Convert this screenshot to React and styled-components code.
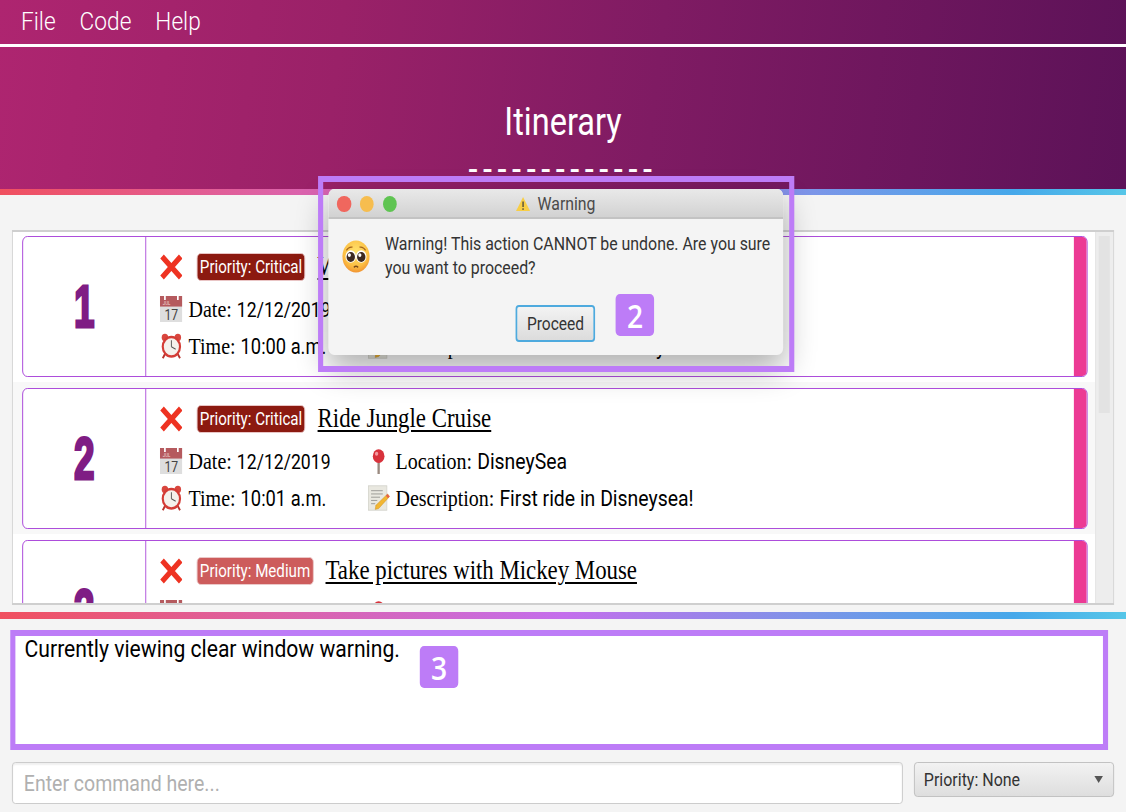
import React from 'react';
import styled, { createGlobalStyle } from 'styled-components';

/* The reference is a window photographed with its width squeezed to 85.5%:
   the page is laid out in unsqueezed widths and the stage is scaled as a whole. */
const SQUEEZE = 0.855;
const X = (n) => `${(n / SQUEEZE).toFixed(2)}px`;
const SANS = `Roboto, "Liberation Sans", sans-serif`;
const SERIF = `"Liberation Serif", "Times New Roman", serif`;
const MARK = '#bd7cf7';

const Global = createGlobalStyle`
  html, body { margin: 0; padding: 0; width: 1126px; height: 812px; overflow: hidden; background: #f4f4f4; }
`;

const Stage = styled.div`
  position: relative; width: ${X(1126)}; height: 812px; overflow: hidden;
  display: flex; flex-direction: column; background: #f4f4f4;
  font-family: ${SANS}; transform: scaleX(${SQUEEZE}); transform-origin: 0 0;
`;
const Banner = styled.header`
  background: linear-gradient(98deg, #ae2570 0%, #9a2168 30%, #7f1b63 58%, #5c1258 100%);
  color: #fff;
`;
const MenuBar = styled.nav`
  height: 44px; box-sizing: content-box; display: flex; align-items: center; gap: ${X(24)}; padding-left: ${X(21)};
  border-bottom: 3px solid #fff; font-size: 26.5px; font-weight: 300; line-height: 42px;
`;
const MenuItem = styled.span`
  margin-top: -2px;
`;
const TitleBlock = styled.div`
  height: 142px; box-sizing: border-box; padding-top: 54px; text-align: center;
`;
const AppTitle = styled.h1`
  margin: 0; font-size: 38px; line-height: 42px; font-weight: 400;
`;
const Dashes = styled.div`
  font-size: 38px; line-height: 36px; letter-spacing: 6.5px; margin-top: 8px; font-weight: 400; white-space: nowrap;
`;
const Rainbow = styled.div`
  height: ${(p) => p.$h}px; flex: none; margin-top: ${(p) => p.$gap || 0}px;
  background: linear-gradient(90deg, #f0505f 0%, #dc62a8 25%, #c46eec 50%, #7c95e8 72%, #46a8ea 90%, #56c6e8 100%);
`;
const ListPanel = styled.section`
  flex: none; display: flex; height: 375px; box-sizing: border-box;
  width: ${X(1102)}; margin: 35px 0 0 ${X(12)};
  border: 1px solid #cfcfcf; border-width: 2px 1px 2px 1px; overflow: hidden; background: #fff;
`;
const List = styled.div`
  flex: 1; min-width: 0; margin-top: -1px;
`;
const Row = styled.div`
  height: 152px; box-sizing: border-box; padding: 6px ${X(8)} 0 ${X(9)};
  background: ${(p) => (p.$alt ? '#f8f8f8' : '#fff')};
  &:first-child { height: 151px; padding-top: 5px; }
`;
const Card = styled.article`
  height: 141px; box-sizing: border-box; display: flex; overflow: hidden; background: #fff;
  border: 1.5px solid #a63fd8; border-radius: 6px;
`;
const Index = styled.div`
  flex: none; width: ${X(123)}; display: flex; align-items: center; justify-content: center;
  border-right: 1.5px solid #a63fd8; color: #7f1d84;
`;
const IndexDigit = styled.span`
  display: inline-block; transform: scaleX(0.72);
  font: 700 60px/1 "Liberation Sans", sans-serif; -webkit-text-stroke: 3px #7f1d84;
`;
const Details = styled.div`
  flex: 1; min-width: 0; padding: 16px 0 0 ${X(13)};
`;
const Head = styled.div`
  display: flex; align-items: center; height: 28px; margin-bottom: 13px;
`;
const Badge = styled.span`
  margin: 0 ${X(12)} 0 ${X(14)}; height: 28px; box-sizing: border-box; padding: 0 ${X(2.5)};
  display: inline-flex; align-items: center; color: #fff; font-size: 17.7px; white-space: nowrap;
  background: ${(p) => p.$bg}; border: 1px solid #eccaca; border-radius: 5px;
`;
const TaskTitle = styled.h2`
  margin: -2px 0 0; font: 400 26.7px/30px ${SERIF}; color: #000; text-decoration: underline;
  text-underline-offset: 3px; white-space: nowrap;
`;
const Facts = styled.div`
  display: grid; grid-template-columns: ${X(208)} 1fr; row-gap: 7px;
`;
const Fact = styled.div`
  height: 30px; display: flex; align-items: center; gap: ${X(6)}; white-space: nowrap; color: #000;
`;
const Key = styled.span`
  font-family: ${SERIF}; font-size: 23.4px; margin-right: ${X(5)};
`;
const Value = styled.span`
  font-size: ${(p) => p.$size || 22.7}px;
`;
const Glyph = styled.svg`
  flex: none; width: ${(p) => X(p.$w)}; height: ${(p) => p.$h}px; display: block;
`;
const Accent = styled.div`
  flex: none; width: ${X(12)}; background: #ec3a94; align-self: stretch;
`;
const ScrollTrack = styled.div`
  flex: none; width: ${X(18)}; background: #ededed; border-left: 1px solid #e2e2e2; box-sizing: border-box;
  padding: 4px ${X(3)} 0;
`;
const ScrollThumb = styled.div`
  height: 177px; background: #e3e3e3;
`;
const Message = styled.section`
  flex: none; height: 120px; box-sizing: border-box; width: ${X(1098)}; margin: 11px 0 0 ${X(10)};
  border: 6px solid ${MARK}; background: #fff; padding: 0 0 0 ${X(9.5)};
  font-size: 24.7px; line-height: 26px; color: #000;
`;
const CommandRow = styled.div`
  flex: none; display: flex; align-items: flex-start; gap: ${X(11)}; margin-top: 12px; padding: 0 ${X(12)};
`;
const CommandInput = styled.input`
  flex: 1; min-width: 0; height: 42px; box-sizing: border-box; padding: 0 ${X(11)};
  border: 1px solid #c8c8c8; border-radius: 4px; background: #fff; outline: none;
  font: 400 22.8px ${SANS}; box-shadow: inset 0 2px 2px #f0f0f0;
  &::placeholder { color: #b0b0b0; opacity: 1; }
`;
const PrioritySelect = styled.div`
  flex: none; width: ${X(200)}; height: 35px; box-sizing: border-box; padding: 0 ${X(10)} 0 ${X(9)};
  display: flex; align-items: center; justify-content: space-between;
  border: 1px solid #bdbdbd; border-radius: 4px; color: #333; font-size: 18.7px;
  background: linear-gradient(#f2f2f2, #dedede);
`;
const Caret = styled.span`
  width: 0; height: 0; border-style: solid; border-width: 7px ${X(5)} 0; border-color: #555 transparent transparent;
`;
const Dialog = styled.div`
  position: absolute; left: ${X(328)}; top: 189px; width: ${X(455)}; height: 166px;
  display: flex; flex-direction: column; background: #f4f4f4; border-radius: 7px; overflow: hidden;
  box-shadow: 0 14px 34px rgba(0, 0, 0, 0.32);
`;
const DialogBar = styled.div`
  height: 30px; flex: none; box-sizing: border-box; padding-top: 1px;
  display: grid; grid-template-columns: 1fr auto 1fr; align-items: center;
  background: linear-gradient(#e9e9e9, #d2d2d2); border-bottom: 2px solid #c3c3c3;
`;
const Lights = styled.div`
  display: flex; gap: ${X(9)}; padding-left: ${X(9)};
`;
const Light = styled.span`
  width: ${X(14)}; height: 16px; border-radius: 50%; background: ${(p) => p.$c};
`;
const DialogName = styled.div`
  display: flex; align-items: center; gap: ${X(7)}; color: #4a4a4a; font-size: 18.5px;
`;
const DialogBody = styled.div`
  display: flex; gap: ${X(15)}; padding: 13px ${X(8)} 0 ${X(14)};
`;
const FaceSlot = styled.div`
  flex: none; padding-top: 8px; height: 40px;
`;
const DialogText = styled.p`
  margin: 0; font-size: 18.6px; line-height: 24px; color: #333;
`;
const DialogFoot = styled.div`
  display: flex; justify-content: center; margin-top: 25px;
`;
const Proceed = styled.button`
  width: ${X(80)}; height: 37px; box-sizing: border-box; padding: 0; color: #333;
  font: 400 18.2px ${SANS}; border: 2px solid #4eaade; border-radius: 4px;
  background: linear-gradient(#f3f3f3, #dcdcdc);
`;
const Frame = styled.div`
  position: absolute; left: ${X(318)}; top: 176px; width: ${X(476)}; height: 196px;
  box-sizing: border-box; border: 6px solid ${MARK};
`;
const Tag = styled.div`
  position: absolute; left: ${(p) => X(p.$x)}; top: ${(p) => p.$y}px; width: ${X(38)}; height: 42px;
  display: flex; align-items: center; justify-content: center; border-radius: 5px;
  background: ${MARK}; color: #fff; font: 600 33px "Open Sans", sans-serif;
`;

const Cross = () => (
  <Glyph $w={23} $h={26} viewBox="0 0 32 32" preserveAspectRatio="none">
    <path d="M3 3 L29 29 M29 3 L3 29" stroke="#ee3322" strokeWidth="7" fill="none" />
  </Glyph>
);
const Calendar = () => (
  <Glyph $w={23} $h={26} viewBox="0 0 32 32" preserveAspectRatio="none">
    <rect width="32" height="32" fill="#dedede" />
    <rect width="32" height="13" fill="#b55a5e" />
    <path d="M7 0v5M25 0v5" stroke="#fff" strokeWidth="2.4" />
    <text x="4" y="11" fontSize="6" fill="#f2dcdc" fontFamily="Roboto, sans-serif">JUL</text>
    <text x="16" y="29" fontSize="17" textAnchor="middle" fill="#444" fontFamily="Roboto, sans-serif">17</text>
  </Glyph>
);
const Clock = () => (
  <Glyph $w={23} $h={26} viewBox="0 0 32 32" preserveAspectRatio="none">
    <circle cx="7" cy="5.5" r="4.5" fill="#d9463e" />
    <circle cx="25" cy="5.5" r="4.5" fill="#d9463e" />
    <path d="M7 26l-3 5M25 26l3 5" stroke="#b8332e" strokeWidth="2.6" />
    <circle cx="16" cy="17" r="13.5" fill="#d43c36" />
    <circle cx="16" cy="17" r="10.5" fill="#f5f1ec" />
    <path d="M16 17V9M16 17l6 3" stroke="#555" strokeWidth="1.3" fill="none" />
  </Glyph>
);
const Pin = () => (
  <Glyph $w={22} $h={26} viewBox="0 0 32 32" preserveAspectRatio="none">
    <path d="M16 14V32" stroke="#9a8a80" strokeWidth="3.4" />
    <circle cx="16" cy="10" r="8.5" fill="#d8323c" />
    <circle cx="13" cy="7" r="2.4" fill="#f39aa0" />
  </Glyph>
);
const Memo = () => (
  <Glyph $w={22} $h={26} viewBox="0 0 32 32" preserveAspectRatio="none">
    <rect x="1" y="1" width="27" height="30" fill="#e9e8e0" stroke="#d0d0c8" />
    <path d="M5 7h17M5 11h17M5 15h13M5 19h9M5 23h6" stroke="#8d8d88" strokeWidth="1.1" />
    <path d="M29 11l3 3-16 15-5 1 1-5z" fill="#f2b632" stroke="#c98c1e" strokeWidth=".6" />
    <path d="M29 11l3 3-2.4 2.3-3-3z" fill="#e4604e" />
  </Glyph>
);
const Alert = () => (
  <Glyph $w={15} $h={16} viewBox="0 0 32 32" preserveAspectRatio="none">
    <path d="M16 2 L31 30 H1 Z" fill="#f8ce46" />
    <path d="M16 11v11" stroke="#3a3a3a" strokeWidth="2.6" />
    <circle cx="16" cy="26" r="1.7" fill="#3a3a3a" />
  </Glyph>
);
const Pleading = () => (
  <Glyph $w={28} $h={33} viewBox="0 0 32 32" preserveAspectRatio="none">
    <defs>
      <radialGradient id="face" cx="50%" cy="35%" r="70%">
        <stop offset="0%" stopColor="#ffe36e" />
        <stop offset="65%" stopColor="#fcc044" />
        <stop offset="100%" stopColor="#ef8a2e" />
      </radialGradient>
    </defs>
    <circle cx="16" cy="16" r="15.5" fill="url(#face)" />
    <path d="M5 10 Q8 6 12 7M27 10 Q24 6 20 7" stroke="#a5641d" strokeWidth="1.2" fill="none" />
    <circle cx="10" cy="16" r="6" fill="#fff" />
    <circle cx="22" cy="16" r="6" fill="#fff" />
    <circle cx="10" cy="16.5" r="4.8" fill="#3d2a20" />
    <circle cx="22" cy="16.5" r="4.8" fill="#3d2a20" />
    <circle cx="8.4" cy="14.6" r="1.8" fill="#fff" />
    <circle cx="20.4" cy="14.6" r="1.8" fill="#fff" />
    <path d="M13.5 26.5 Q16 24.4 18.5 26.5" stroke="#7a4a1a" strokeWidth="1.4" fill="none" />
  </Glyph>
);

const TASKS = [
  { n: 1, level: 'Critical', bg: '#8c1a10', title: 'Watch the parade', date: '12/12/2019', time: '10:00 a.m.', place: 'Disneyland', note: 'First ride of the day' },
  { n: 2, level: 'Critical', bg: '#8c1a10', title: 'Ride Jungle Cruise', date: '12/12/2019', time: '10:01 a.m.', place: 'DisneySea', note: 'First ride in Disneysea!' },
  { n: 3, level: 'Medium', bg: '#cd5c5c', title: 'Take pictures with Mickey Mouse', date: '12/12/2019', place: 'DisneySea' },
];

export default function App() {
  return (
    <Stage>
      <Global />
      <Banner>
        <MenuBar>
          <MenuItem>File</MenuItem>
          <MenuItem>Code</MenuItem>
          <MenuItem>Help</MenuItem>
        </MenuBar>
        <TitleBlock>
          <AppTitle>Itinerary</AppTitle>
          <Dashes>-------------</Dashes>
        </TitleBlock>
      </Banner>
      <Rainbow $h={6} />
      <ListPanel>
        <List>
          {TASKS.map((t, i) => (
            <Row key={t.n} $alt={i % 2 === 1}>
              <Card>
                <Index><IndexDigit>{t.n}</IndexDigit></Index>
                <Details>
                  <Head>
                    <Cross />
                    <Badge $bg={t.bg}>Priority: {t.level}</Badge>
                    <TaskTitle>{t.title}</TaskTitle>
                  </Head>
                  <Facts>
                    <Fact><Calendar /><span><Key>Date:</Key><Value $size={20.6}>{t.date}</Value></span></Fact>
                    <Fact><Pin /><span><Key>Location:</Key><Value>{t.place}</Value></span></Fact>
                    {t.time && <Fact><Clock /><span><Key>Time:</Key><Value $size={21.4}>{t.time}</Value></span></Fact>}
                    {t.note && <Fact><Memo /><span><Key>Description:</Key><Value>{t.note}</Value></span></Fact>}
                  </Facts>
                </Details>
                <Accent />
              </Card>
            </Row>
          ))}
        </List>
        <ScrollTrack><ScrollThumb /></ScrollTrack>
      </ListPanel>
      <Rainbow $h={7} $gap={7} />
      <Message>Currently viewing clear window warning.</Message>
      <CommandRow>
        <CommandInput placeholder="Enter command here..." />
        <PrioritySelect>
          <span>Priority: None</span>
          <Caret />
        </PrioritySelect>
      </CommandRow>

      <Dialog>
        <DialogBar>
          <Lights>
            <Light $c="#f0675e" />
            <Light $c="#f6bd4f" />
            <Light $c="#5fc452" />
          </Lights>
          <DialogName><Alert /><span>Warning</span></DialogName>
        </DialogBar>
        <DialogBody>
          <FaceSlot><Pleading /></FaceSlot>
          <DialogText>Warning! This action CANNOT be undone. Are you sure you want to proceed?</DialogText>
        </DialogBody>
        <DialogFoot>
          <Proceed>Proceed</Proceed>
        </DialogFoot>
      </Dialog>
      <Frame />
      <Tag $x={616} $y={294}>2</Tag>
      <Tag $x={420} $y={646}>3</Tag>
    </Stage>
  );
}
